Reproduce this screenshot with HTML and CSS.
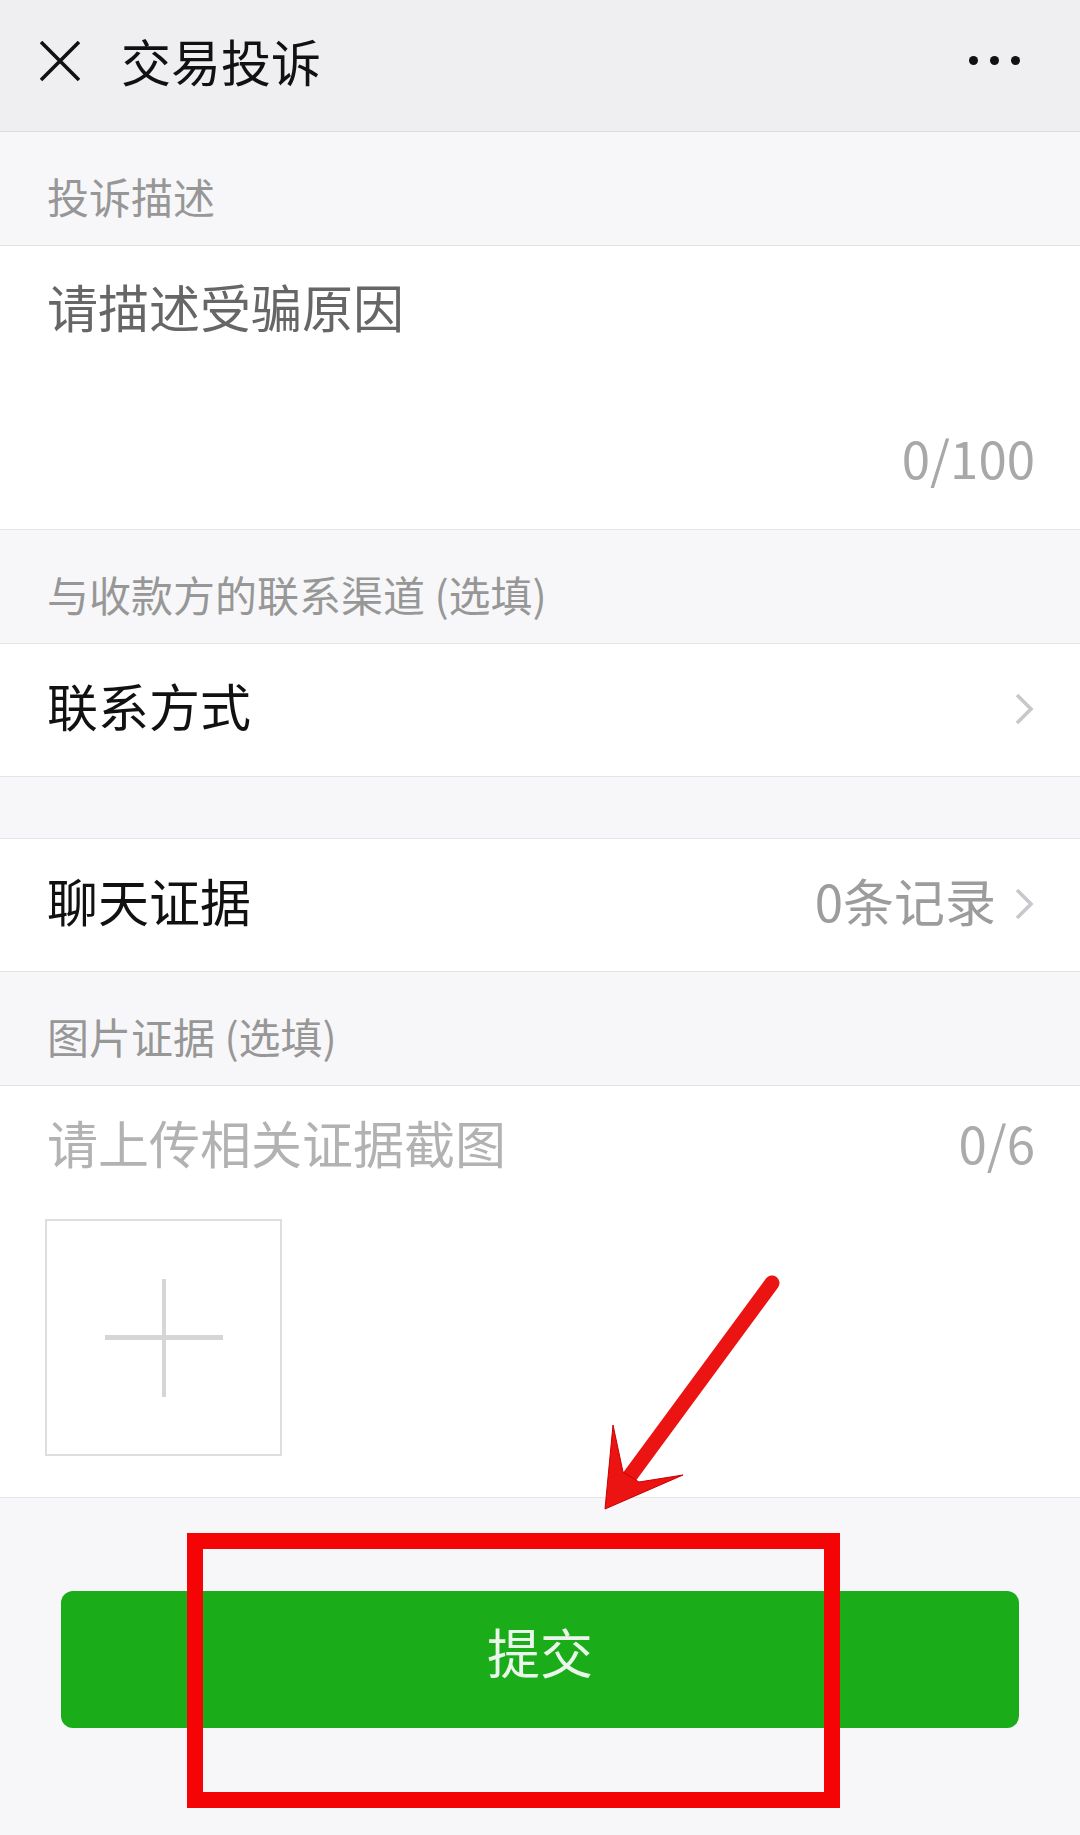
FILE: index.html
```html
<!DOCTYPE html>
<html lang="zh-CN">
<head>
    <meta charset="UTF-8">
    <meta name="viewport" content="width=device-width, initial-scale=1.0">
    <title>交易投诉</title>
    <link rel="stylesheet" href="styles.css">
</head>
<body>
    <div class="page">
        <header class="topbar">
            <svg class="close-icon" width="40" height="40" viewBox="0 0 40 40">
                <path d="M1 1 L39 39 M39 1 L1 39" stroke="#111" stroke-width="3.6" fill="none"/>
            </svg>
            <h1 class="title">交易投诉</h1>
            <div class="more">
                <span></span><span></span><span></span>
            </div>
        </header>

        <div class="group-title">投诉描述</div>
        <div class="textarea">
            <div class="placeholder">请描述受骗原因</div>
            <div class="counter">0/100</div>
        </div>

        <div class="group-title">与收款方的联系渠道 (选填)</div>
        <div class="cell">
            <span class="cell-label">联系方式</span>
            <svg class="chevron" width="20" height="32" viewBox="0 0 20 32">
                <path d="M3 2 L17 16 L3 30" stroke="#c8c8cc" stroke-width="3.6" fill="none"/>
            </svg>
        </div>

        <div class="spacer"></div>

        <div class="cell">
            <span class="cell-label">聊天证据</span>
            <span class="cell-value">0条记录</span>
            <svg class="chevron" width="20" height="32" viewBox="0 0 20 32">
                <path d="M3 2 L17 16 L3 30" stroke="#c8c8cc" stroke-width="3.6" fill="none"/>
            </svg>
        </div>

        <div class="group-title">图片证据 (选填)</div>
        <div class="uploader">
            <div class="uploader-head">
                <span class="hint">请上传相关证据截图</span>
                <span class="counter">0/6</span>
            </div>
            <div class="upload-box">
                <span class="plus-h"></span>
                <span class="plus-v"></span>
            </div>
        </div>

        <div class="footer">
            <button class="submit">提交</button>
        </div>

        <!-- red annotation: frame around the button and an arrow pointing at it -->
        <div class="mark-box"></div>
        <svg class="mark-arrow" width="200" height="250" viewBox="0 0 200 250">
            <line x1="182" y1="13" x2="40" y2="206" stroke="#ec1313" stroke-width="15" stroke-linecap="round"/>
            <polygon points="15,239 23,155 33,202 49,212 93,205" fill="#ec1313" stroke="#c80000" stroke-width="1" stroke-linejoin="round"/>
        </svg>
    </div>
</body>
</html>
```

FILE: styles.css
```css
* {
    margin: 0;
    padding: 0;
    box-sizing: border-box;
}

body {
    font-family: "Noto Sans CJK SC", "Noto Sans", sans-serif;
    background-color: #f7f7f9;
}

.page {
    position: relative;
    width: 1080px;
    min-height: 1835px;
    background-color: #f7f7f9;
    overflow: hidden;
}

/* top bar */
.topbar {
    height: 132px;
    display: flex;
    align-items: center;
    padding: 0 60px 12px 40px;
    background-color: #efeff1;
    border-bottom: 1px solid #dcdcdf;
}

.close-icon {
    flex-shrink: 0;
    margin-right: 41px;
    margin-top: 2px;
}

.title {
    flex: 1;
    font-size: 50px;
    font-weight: 400;
    line-height: 60px;
    color: #111;
}

.more {
    display: flex;
    gap: 12px;
    margin-top: 2px;
}

.more span {
    width: 9px;
    height: 9px;
    border-radius: 50%;
    background-color: #111;
}

/* grey group headings */
.group-title {
    height: 114px;
    padding: 41px 47px 0;
    font-size: 42px;
    line-height: 46px;
    color: #979797;
    background-color: #f7f7f9;
    border-bottom: 1px solid #e4e4e6;
}

/* description field */
.textarea {
    height: 284px;
    display: flex;
    flex-direction: column;
    justify-content: space-between;
    padding: 30px 45px 42px 47px;
    background-color: #fff;
    border-bottom: 1px solid #e4e4e6;
}

.placeholder {
    font-size: 51px;
    line-height: 60px;
    color: #666;
}

.counter {
    font-size: 51px;
    line-height: 60px;
    color: #a8a8a8;
    text-align: right;
}

/* list cells */
.cell {
    height: 133px;
    display: flex;
    align-items: center;
    padding: 0 46px 10px 47px;
    background-color: #fff;
    border-bottom: 1px solid #e4e4e6;
}

.cell-label {
    flex: 1;
    font-size: 51px;
    line-height: 60px;
    color: #111;
}

.cell-value {
    font-size: 51px;
    line-height: 60px;
    color: #9c9c9c;
    margin-right: 18px;
}

.chevron {
    flex-shrink: 0;
    margin-top: 8px;
}

.spacer {
    height: 62px;
    background-color: #f7f7f9;
    border-bottom: 1px solid #e4e4e6;
}

/* image upload */
.uploader {
    height: 412px;
    padding: 26px 45px 0 47px;
    background-color: #fff;
    border-bottom: 1px solid #e4e4e6;
}

.uploader-head {
    display: flex;
    justify-content: space-between;
    font-size: 51px;
    line-height: 60px;
}

.hint {
    color: #b2b2b2;
}

.uploader-head .counter {
    color: #ababab;
}

.upload-box {
    position: relative;
    width: 237px;
    height: 237px;
    margin-top: 47px;
    margin-left: -2px;
    border: 2px solid #dedede;
    display: flex;
    align-items: center;
    justify-content: center;
}

.plus-h {
    width: 118px;
    height: 5px;
    background-color: #d6d6d6;
}

.plus-v {
    position: absolute;
    width: 4px;
    height: 118px;
    background-color: #d6d6d6;
}

/* bottom action area */
.footer {
    padding-top: 93px;
    display: flex;
    justify-content: center;
}

.submit {
    width: 958px;
    height: 137px;
    padding-bottom: 18px;
    border: none;
    border-radius: 12px;
    background-color: #1aac19;
    color: #eaf6ea;
    font-family: inherit;
    font-size: 53px;
    line-height: 60px;
    cursor: pointer;
}

/* annotation overlay */
.mark-box {
    position: absolute;
    left: 187px;
    top: 1533px;
    width: 653px;
    height: 275px;
    border: 16px solid #f40404;
}

.mark-arrow {
    position: absolute;
    left: 590px;
    top: 1270px;
}
```
